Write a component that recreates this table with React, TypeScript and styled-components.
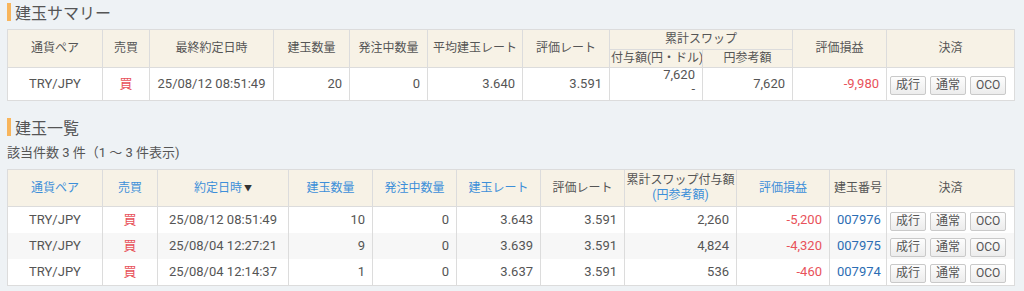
import React from "react";
import styled, { createGlobalStyle } from "styled-components";

const GlobalStyle = createGlobalStyle`
  html, body {
    margin: 0;
    padding: 0;
    background: #eef2f5;
  }
  body {
    font-family: Roboto, "Noto Sans CJK JP", sans-serif;
    color: #555;
  }
`;

const Page = styled.div`
  padding: 3px 10px 0 7px;
`;

const SectionTitle = styled.h2`
  display: flex;
  align-items: center;
  gap: 4px;
  margin: 0;
  height: 18px;
  font-size: 16px;
  font-weight: 400;
  color: #555;
  &::before {
    content: "";
    width: 4px;
    height: 18px;
    background: #f8b55c;
  }
`;

const Count = styled.div`
  font-size: 13px;
  line-height: 16px;
  margin: 9px 0 8px;
  color: #555;
`;

const Table = styled.table<{ $top?: number }>`
  width: 1007px;
  table-layout: fixed;
  border-collapse: collapse;
  background: #fff;
  font-size: 13px;
  margin-top: ${(p) => p.$top ?? 0}px;
  th, td {
    border: 1px solid #dcdcdc;
    padding: 0 7px;
    white-space: nowrap;
    overflow: hidden;
  }
  tbody td {
    border-top: none;
    border-bottom: none;
  }
  tbody tr:last-child td {
    border-bottom: 1px solid #dcdcdc;
  }
`;

const Th = styled.th<{ $link?: boolean; $h?: number }>`
  background: #f7f2e6;
  font-weight: 400;
  font-size: 12px;
  color: ${(p) => (p.$link ? "#3d8fd9" : "#555")};
  height: ${(p) => p.$h ?? 36}px;
  text-align: center;
  line-height: 15px;
  && {
    padding: 0 1px;
  }
`;

const Sub = styled.span`
  color: #3d8fd9;
`;

const Sort = styled.span`
  color: #333;
  font-size: 8px;
  margin-left: 2px;
  vertical-align: 1px;
`;

const Tr = styled.tr<{ $alt?: boolean }>`
  background: ${(p) => (p.$alt ? "#f7f7f7" : "#fff")};
`;

const Td = styled.td<{ $align?: string; $color?: string; $h?: number }>`
  height: ${(p) => p.$h ?? 24}px;
  text-align: ${(p) => p.$align ?? "right"};
  color: ${(p) => p.$color ?? "#555"};
  line-height: 16px;
`;

const Stack = styled.div`
  display: flex;
  flex-direction: column;
  align-items: flex-end;
  line-height: 14px;
  margin-top: -4px;
`;

const Buttons = styled.div`
  display: flex;
  gap: 4px;
  margin: 2px 0 0 -4px;
`;

const Btn = styled.button`
  height: 19px;
  padding: 0 5px;
  border: 1px solid #c9c9c9;
  border-radius: 2px;
  background: linear-gradient(#fdfdfd, #ececec);
  font-family: Roboto, "Noto Sans CJK JP", sans-serif;
  font-size: 12px;
  color: #555;
  line-height: 15px;
`;

const RED = "#e8525a";
const ID = "#2c6db3";

const Actions = () => (
  <Buttons>
    <Btn>成行</Btn>
    <Btn>通常</Btn>
    <Btn>OCO</Btn>
  </Buttons>
);

const rows = [
  { date: "25/08/12 08:51:49", qty: "10", rate: "3.643", swap: "2,260", pl: "-5,200", id: "007976" },
  { date: "25/08/04 12:27:21", qty: "9", rate: "3.639", swap: "4,824", pl: "-4,320", id: "007975" },
  { date: "25/08/04 12:14:37", qty: "1", rate: "3.637", swap: "536", pl: "-460", id: "007974" },
];

const summaryCols = [95, 47, 124, 76, 78, 95, 87, 93, 90, 94, 128];
const listCols = [95, 55, 131, 84, 84, 84, 84, 112, 93, 57, 128];

export default function App() {
  return (
    <Page>
      <GlobalStyle />
      <SectionTitle>建玉サマリー</SectionTitle>
      <Table $top={8}>
        <colgroup>
          {summaryCols.map((w, i) => (
            <col key={i} style={{ width: w }} />
          ))}
        </colgroup>
        <thead>
          <tr>
            <Th rowSpan={2}>通貨ペア</Th>
            <Th rowSpan={2}>売買</Th>
            <Th rowSpan={2}>最終約定日時</Th>
            <Th rowSpan={2}>建玉数量</Th>
            <Th rowSpan={2}>発注中数量</Th>
            <Th rowSpan={2}>平均建玉レート</Th>
            <Th rowSpan={2}>評価レート</Th>
            <Th colSpan={2} $h={19}>累計スワップ</Th>
            <Th rowSpan={2}>評価損益</Th>
            <Th rowSpan={2}>決済</Th>
          </tr>
          <tr>
            <Th $h={17}>付与額(円・ドル)</Th>
            <Th $h={17}>円参考額</Th>
          </tr>
        </thead>
        <tbody>
          <Tr>
            <Td $h={32} $align="center">TRY/JPY</Td>
            <Td $align="center" $color={RED}>買</Td>
            <Td $align="center">25/08/12 08:51:49</Td>
            <Td>20</Td>
            <Td>0</Td>
            <Td>3.640</Td>
            <Td>3.591</Td>
            <Td>
              <Stack>
                <span>7,620</span>
                <span>-</span>
              </Stack>
            </Td>
            <Td>7,620</Td>
            <Td $color={RED}>-9,980</Td>
            <Td $align="left">
              <Actions />
            </Td>
          </Tr>
        </tbody>
      </Table>

      <div style={{ height: 17 }} />
      <SectionTitle>建玉一覧</SectionTitle>
      <Count>該当件数 3 件（1 ～ 3 件表示)</Count>
      <Table>
        <colgroup>
          {listCols.map((w, i) => (
            <col key={i} style={{ width: w }} />
          ))}
        </colgroup>
        <thead>
          <tr>
            <Th $link>通貨ペア</Th>
            <Th $link>売買</Th>
            <Th $link>
              約定日時<Sort>▼</Sort>
            </Th>
            <Th $link>建玉数量</Th>
            <Th $link>発注中数量</Th>
            <Th $link>建玉レート</Th>
            <Th>評価レート</Th>
            <Th>
              累計スワップ付与額
              <br />
              <Sub>(円参考額)</Sub>
            </Th>
            <Th $link>評価損益</Th>
            <Th>建玉番号</Th>
            <Th>決済</Th>
          </tr>
        </thead>
        <tbody>
          {rows.map((r, i) => (
            <Tr key={r.id} $alt={i === 1}>
              <Td $h={26} $align="center">TRY/JPY</Td>
              <Td $align="center" $color={RED}>買</Td>
              <Td $align="center">{r.date}</Td>
              <Td>{r.qty}</Td>
              <Td>0</Td>
              <Td>{r.rate}</Td>
              <Td>3.591</Td>
              <Td>{r.swap}</Td>
              <Td $color={RED}>{r.pl}</Td>
              <Td $align="center" $color={ID}>{r.id}</Td>
              <Td $align="left">
                <Actions />
              </Td>
            </Tr>
          ))}
        </tbody>
      </Table>
    </Page>
  );
}
